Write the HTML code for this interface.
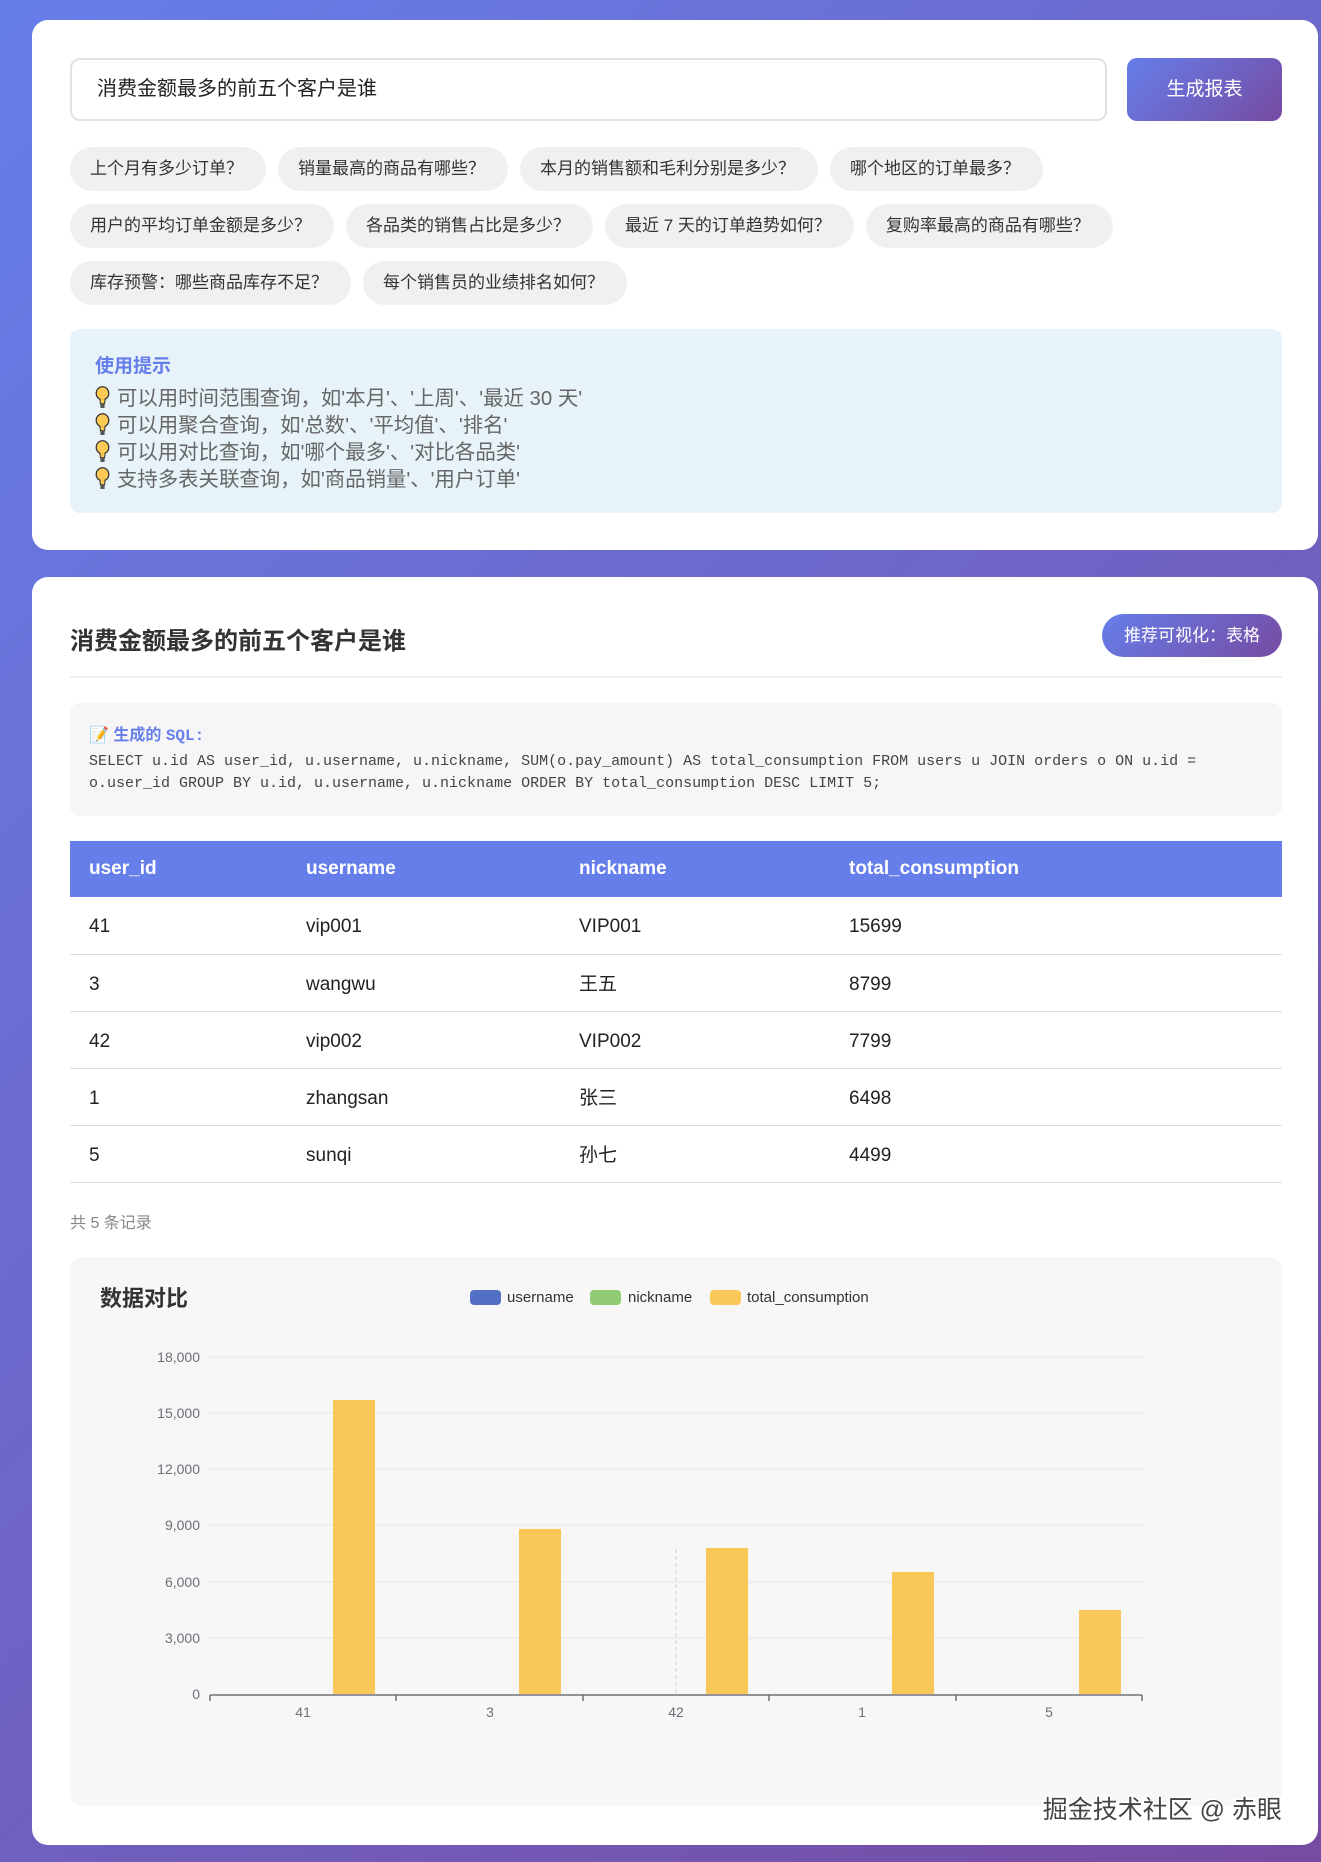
<!DOCTYPE html>
<html><head><meta charset="utf-8"><style>
*{box-sizing:border-box;margin:0;padding:0}
body{width:1321px;height:1862px;overflow:hidden;background:linear-gradient(135deg,#667eea 0%,#764ba2 100%);font-family:"Liberation Sans","Noto Sans CJK SC",sans-serif;position:relative;color:#333}
.card{position:absolute;left:32px;width:1286px;background:#fff;border-radius:16px}
.abs{position:absolute}
.inp{left:38px;top:38px;width:1037px;height:63px;border:2px solid #e2e2e2;border-radius:10px;font-size:20px;padding:0 25px;line-height:59px;color:#222}
.btn{left:1095px;top:38px;width:155px;height:63px;border-radius:10px;background:linear-gradient(135deg,#667eea,#764ba2);color:#fff;font-size:19px;text-align:center;line-height:63px}
.chips{left:38px;top:127px;width:1180px}
.chip{display:inline-block;height:44px;line-height:44px;padding:0 23px 0 20px;background:#f0f0f0;border-radius:22px;font-size:17px;color:#333;margin:0 12px 13px 0}
.tips{left:38px;top:309px;width:1212px;height:184px;background:#e7f3f8;border-radius:10px;padding:22px 25px}
.tips h4{color:#667eea;font-size:19px;margin-bottom:8px}
.tips div{font-size:20.4px;color:#666;line-height:27px;white-space:nowrap}
.bulb{display:inline-block;width:15px;height:23px;vertical-align:-4px;margin-right:7px}
th,td{text-align:left;font-size:19px;padding-left:19px;vertical-align:middle;line-height:24px}
table{border-collapse:collapse;width:1212px}
th{background:#667eea;color:#fff;height:56px;font-weight:bold}
td{height:57px;border-bottom:1px solid #ddd;color:#222;padding-top:4px}
</style></head><body>
<div class="card" style="top:20px;height:530px">
 <div class="abs inp">消费金额最多的前五个客户是谁</div>
 <div class="abs btn">生成报表</div>
 <div class="abs chips">
  <span class="chip">上个月有多少订单？</span><span class="chip">销量最高的商品有哪些？</span><span class="chip">本月的销售额和毛利分别是多少？</span><span class="chip">哪个地区的订单最多？</span><br>
  <span class="chip">用户的平均订单金额是多少？</span><span class="chip">各品类的销售占比是多少？</span><span class="chip">最近 7 天的订单趋势如何？</span><span class="chip">复购率最高的商品有哪些？</span><br>
  <span class="chip">库存预警：哪些商品库存不足？</span><span class="chip">每个销售员的业绩排名如何？</span>
 </div>
 <div class="abs tips">
  <h4>使用提示</h4>
  <div><svg class="bulb" viewBox="0 0 14 22"><ellipse cx="7" cy="7" rx="6" ry="6.3" fill="#fcc954" stroke="#333" stroke-width="1.2"/><path d="M4.5 12.5 L5 17 L9 17 L9.5 12.5" fill="#fcc954" stroke="#333"/><rect x="5" y="17" width="4" height="4" fill="#555"/></svg>可以用时间范围查询，如'本月'、'上周'、'最近 30 天'</div>
  <div><svg class="bulb" viewBox="0 0 14 22"><ellipse cx="7" cy="7" rx="6" ry="6.3" fill="#fcc954" stroke="#333" stroke-width="1.2"/><path d="M4.5 12.5 L5 17 L9 17 L9.5 12.5" fill="#fcc954" stroke="#333"/><rect x="5" y="17" width="4" height="4" fill="#555"/></svg>可以用聚合查询，如'总数'、'平均值'、'排名'</div>
  <div><svg class="bulb" viewBox="0 0 14 22"><ellipse cx="7" cy="7" rx="6" ry="6.3" fill="#fcc954" stroke="#333" stroke-width="1.2"/><path d="M4.5 12.5 L5 17 L9 17 L9.5 12.5" fill="#fcc954" stroke="#333"/><rect x="5" y="17" width="4" height="4" fill="#555"/></svg>可以用对比查询，如'哪个最多'、'对比各品类'</div>
  <div><svg class="bulb" viewBox="0 0 14 22"><ellipse cx="7" cy="7" rx="6" ry="6.3" fill="#fcc954" stroke="#333" stroke-width="1.2"/><path d="M4.5 12.5 L5 17 L9 17 L9.5 12.5" fill="#fcc954" stroke="#333"/><rect x="5" y="17" width="4" height="4" fill="#555"/></svg>支持多表关联查询，如'商品销量'、'用户订单'</div>
 </div>
</div>

<div class="card" style="top:577px;height:1268px">
 <div class="abs" style="left:38px;top:44px;font-size:24px;font-weight:bold;color:#333">消费金额最多的前五个客户是谁</div>
 <div class="abs" style="left:1070px;top:37px;width:180px;height:43px;border-radius:22px;background:linear-gradient(135deg,#667eea,#764ba2);color:#fff;font-size:17px;text-align:center;line-height:43px">推荐可视化：表格</div>
 <div class="abs" style="left:38px;top:99px;width:1212px;height:2px;background:#eee"></div>
 <div class="abs" style="left:38px;top:126px;width:1212px;height:113px;background:#f6f6f6;border-radius:10px;padding:18px 19px">
  <div style="font-size:16px;color:#667eea;font-weight:bold;margin-bottom:6px">📝 生成的 <span style="font-family:'Liberation Mono',monospace">SQL:</span></div>
  <div style="font-family:'Liberation Mono','Noto Sans CJK SC',monospace;font-size:15px;line-height:22px;color:#444;width:1140px">SELECT u.id AS user_id, u.username, u.nickname, SUM(o.pay_amount) AS total_consumption FROM users u JOIN orders o ON u.id = o.user_id GROUP BY u.id, u.username, u.nickname ORDER BY total_consumption DESC LIMIT 5;</div>
 </div>
 <table class="abs" style="left:38px;top:264px">
  <tr><th style="width:217px">user_id</th><th style="width:273px">username</th><th style="width:270px">nickname</th><th>total_consumption</th></tr>
  <tr><td>41</td><td>vip001</td><td>VIP001</td><td>15699</td></tr>
  <tr><td>3</td><td>wangwu</td><td>王五</td><td>8799</td></tr>
  <tr><td>42</td><td>vip002</td><td>VIP002</td><td>7799</td></tr>
  <tr><td>1</td><td>zhangsan</td><td>张三</td><td>6498</td></tr>
  <tr><td>5</td><td>sunqi</td><td>孙七</td><td>4499</td></tr>
 </table>
 <div class="abs" style="left:38px;top:632px;font-size:16px;color:#888">共 5 条记录</div>
 <div class="abs" style="left:38px;top:680px;width:1212px;height:549px;background:#f7f7f8;border-radius:12px"></div>
</div>

<svg class="abs" style="left:0;top:0" width="1321" height="1862" font-family="Liberation Sans, Noto Sans CJK SC, sans-serif">
 <text x="100" y="1306" font-size="22" font-weight="bold" fill="#333">数据对比</text>
 <rect x="470" y="1290" width="31" height="15" rx="4" fill="#5470c6"/><text x="507" y="1302" font-size="15" fill="#333">username</text>
 <rect x="590" y="1290" width="31" height="15" rx="4" fill="#91cc75"/><text x="628" y="1302" font-size="15" fill="#333">nickname</text>
 <rect x="710" y="1290" width="31" height="15" rx="4" fill="#fac858"/><text x="747" y="1302" font-size="15" fill="#333">total_consumption</text>
 <g stroke="#e6e6ea" stroke-width="1">
  <line x1="210" y1="1357" x2="1142" y2="1357"/><line x1="210" y1="1413" x2="1142" y2="1413"/><line x1="210" y1="1469" x2="1142" y2="1469"/><line x1="210" y1="1525" x2="1142" y2="1525"/><line x1="210" y1="1582" x2="1142" y2="1582"/><line x1="210" y1="1638" x2="1142" y2="1638"/>
 </g>
 <g font-size="14" fill="#6e7079" text-anchor="end">
  <text x="200" y="1362">18,000</text><text x="200" y="1418">15,000</text><text x="200" y="1474">12,000</text><text x="200" y="1530">9,000</text><text x="200" y="1587">6,000</text><text x="200" y="1643">3,000</text><text x="200" y="1699">0</text>
 </g>
 <line x1="676" y1="1549" x2="676" y2="1694" stroke="#ccc" stroke-dasharray="4,3"/>
 <g fill="#fac858">
  <rect x="333" y="1400" width="42" height="294"/>
  <rect x="519" y="1529" width="42" height="165"/>
  <rect x="706" y="1548" width="42" height="146"/>
  <rect x="892" y="1572" width="42" height="122"/>
  <rect x="1079" y="1610" width="42" height="84"/>
 </g>
 <g stroke="#6e7079" stroke-width="1.5"><line x1="210" y1="1695" x2="1142" y2="1695"/>
  <line x1="210" y1="1695" x2="210" y2="1701"/><line x1="396" y1="1695" x2="396" y2="1701"/><line x1="583" y1="1695" x2="583" y2="1701"/><line x1="769" y1="1695" x2="769" y2="1701"/><line x1="956" y1="1695" x2="956" y2="1701"/><line x1="1142" y1="1695" x2="1142" y2="1701"/></g>
 <g font-size="14" fill="#6e7079" text-anchor="middle">
  <text x="303" y="1717">41</text><text x="490" y="1717">3</text><text x="676" y="1717">42</text><text x="862" y="1717">1</text><text x="1049" y="1717">5</text>
 </g>
 <text x="1282" y="1818" font-size="25" text-anchor="end" fill="#444" stroke="#fff" stroke-width="3" paint-order="stroke">掘金技术社区 @ 赤眼</text>
</svg>
</body></html>
